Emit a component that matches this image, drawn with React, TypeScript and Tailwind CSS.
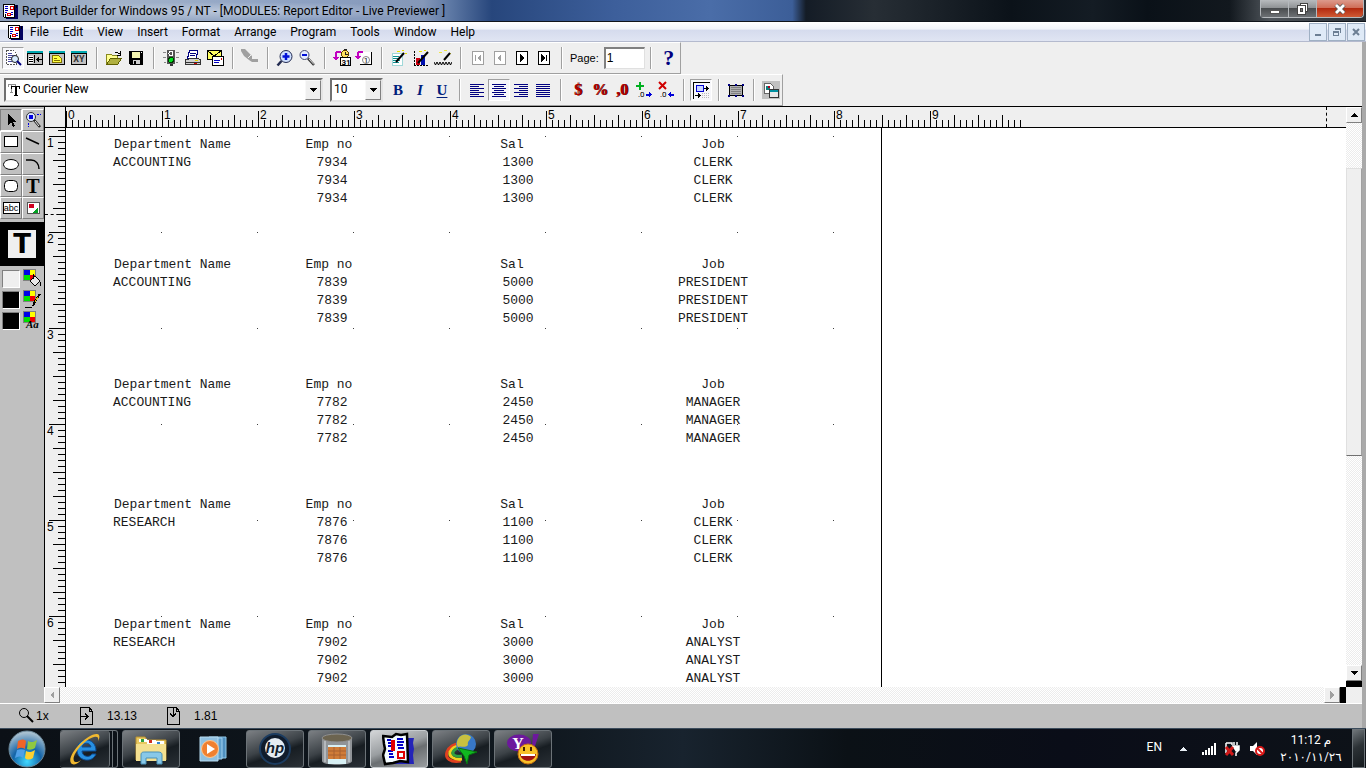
import type { ReactNode } from "react";

const menus = ["File", "Edit", "View", "Insert", "Format", "Arrange", "Program", "Tools", "Window", "Help"];

const records = [
  { department: "ACCOUNTING", empNo: "7934", sal: "1300", job: "CLERK" },
  { department: "ACCOUNTING", empNo: "7839", sal: "5000", job: "PRESIDENT" },
  { department: "ACCOUNTING", empNo: "7782", sal: "2450", job: "MANAGER" },
  { department: "RESEARCH", empNo: "7876", sal: "1100", job: "CLERK" },
  { department: "RESEARCH", empNo: "7902", sal: "3000", job: "ANALYST" },
];

function Svg({ w = 18, h = 18, smooth = false, children }: { w?: number; h?: number; smooth?: boolean; children: ReactNode }) {
  return (
    <svg width={w} height={h} viewBox={`0 0 ${w} ${h}`} fill="none" shapeRendering={smooth ? "auto" : "crispEdges"} className="shrink-0" aria-hidden="true">
      {children}
    </svg>
  );
}

function Tool({ label, pressed = false, disabled = false, children }: { label: string; pressed?: boolean; disabled?: boolean; children: ReactNode }) {
  return (
    <button
      type="button"
      aria-label={label}
      disabled={disabled}
      className={
        pressed
          ? "flex h-[22px] w-[22px] shrink-0 items-center justify-center border border-t-[#a0a0a0] border-r-white border-b-white border-l-[#a0a0a0] bg-[#f6f6fa]"
          : "flex h-[22px] w-[22px] shrink-0 items-center justify-center"
      }
    >
      {children}
    </button>
  );
}

function Separator() {
  return (
    <div className="flex w-[13px] shrink-0 justify-center">
      <div className="h-[22px] w-[2px] border-l border-[#a0a0a0] bg-white" />
    </div>
  );
}

function ReportIcon() {
  return (
    <Svg w={16} h={16}>
      <path d="M3 2h13v14H4z" fill="#000060" />
      <path d="M1 1h11v13H2z" fill="#fff" stroke="#000" />
      <path d="M3 3h3M3 5h3M3 7h3M3 9h2M9 9h2M9 11h2" stroke="#0000c8" />
      <path d="M8 3h3v3H8zM5 10h3v2H5z" stroke="#e00000" />
      <path d="M3 11v4M14 2v3" stroke="#000" />
    </Svg>
  );
}

function MiniWindow({ children }: { children: ReactNode }) {
  return (
    <Svg>
      <path d="M1 3h16v13H1z" fill="#c0c0c0" />
      <path d="M1 2h16v2H1z" fill="#00a8b0" />
      <path d="M1.500 4.500h15v11h-15z" stroke="#000" />
      {children}
    </Svg>
  );
}

function PageArrow({ faded = false, children }: { faded?: boolean; children: ReactNode }) {
  return (
    <Svg w={14} h={16}>
      <path d="M1.500 1.500h11v13h-11z" fill="#fff" stroke={faded ? "#a0a0a0" : "#000"} />
      <g fill={faded ? "#a0a0a0" : "#000"}>{children}</g>
    </Svg>
  );
}

function TitleBar() {
  return (
    <header className="flex h-[22px] shrink-0 items-center border-b border-[#10151c] bg-[linear-gradient(90deg,#8a9db8_0%,#a3b3ca_8%,#8fa3c4_20%,#8497b8_31%,#5d78a4_33%,#27467c_36%,#3d5f9b_45%,#4a6da8_52%,#3c5e98_58%,#141c26_59%,#272e35_64%,#0b1219_74%,#141c24_80%,#0a1118_84%,#12181e_90%,#50565c_93%,#2a3036_100%)] pl-[2px]">
      <ReportIcon />
      <div className="ml-1 flex-1">
        <h1 className="w-fit bg-[radial-gradient(closest-side,rgba(255,255,255,0.35),transparent)] text-[12px] leading-[18px] whitespace-nowrap text-black">
          Report Builder for Windows 95 / NT - [MODULE5: Report Editor - Live Previewer ]
        </h1>
      </div>
      <div className="mr-[2px] flex h-[18px] self-start rounded-b-[4px] border border-t-0 border-[#b5b9bd]">
        <button type="button" aria-label="Minimize" className="flex w-7 items-center justify-center border-r border-[#b5b9bd] bg-[linear-gradient(#b8bbbe_0%,#8d9093_48%,#4a4d50_50%,#6c7074_100%)]">
          <Svg w={12} h={14}>
            <path d="M1.500 8.500h9v3h-9z" fill="#fff" stroke="#555" />
          </Svg>
        </button>
        <button type="button" aria-label="Restore" className="flex w-7 items-center justify-center border-r border-[#b5b9bd] bg-[linear-gradient(#b8bbbe_0%,#8d9093_48%,#4a4d50_50%,#6c7074_100%)]">
          <Svg w={13} h={14}>
            <path d="M4.500 1.500h7v8h-7z" fill="#fff" stroke="#444" />
            <path d="M1.500 3.500h8v9h-8z" fill="#fff" stroke="#444" />
            <path d="M4.500 6.500h2v3h-2z" fill="#777" stroke="#444" />
          </Svg>
        </button>
        <button type="button" aria-label="Close" className="flex w-[46px] items-center justify-center rounded-br-[4px] bg-[linear-gradient(#dc9a8c_0%,#cf6b55_48%,#b32a10_50%,#cf5a34_100%)]">
          <Svg w={14} h={14} smooth>
            <path d="M3 3l8 8M11 3l-8 8" stroke="#555" strokeWidth="4.500" />
            <path d="M3 3l8 8M11 3l-8 8" stroke="#fff" strokeWidth="2.800" />
          </Svg>
        </button>
      </div>
    </header>
  );
}

function MenuBar() {
  const child = "flex h-[18px] w-[18px] items-center justify-center border border-[#9fb0c4] bg-[#dfeaf7]";
  return (
    <nav className="flex h-5 shrink-0 items-center border-b border-[#b4bace] bg-[linear-gradient(#ffffff_0%,#f1f4fa_38%,#d5dbed_42%,#e0e5f3_100%)] pl-[7px]">
      <ReportIcon />
      <ul className="ml-[7px] flex flex-1 gap-[14px] text-[12px] leading-[18px]">
        {menus.map((menu) => (
          <li key={menu}>
            <button type="button">{menu}</button>
          </li>
        ))}
      </ul>
      <div className="mr-px flex gap-px">
        <button type="button" aria-label="Minimize document" className={child}>
          <Svg w={10} h={10}>
            <path d="M2 7h6v2H2z" fill="#6c7f94" />
          </Svg>
        </button>
        <button type="button" aria-label="Restore document" className={child}>
          <Svg w={10} h={10}>
            <path d="M3 1h6v5H8V3H3zM1 4h6v5H1z" fill="#6c7f94" />
            <path d="M2 6h4v2H2z" fill="#dfeaf7" />
          </Svg>
        </button>
        <button type="button" aria-label="Close document" className={child}>
          <Svg w={10} h={10} smooth>
            <path d="M2 2l6 6M8 2l-6 6" stroke="#6c7f94" strokeWidth="2" />
          </Svg>
        </button>
      </div>
    </nav>
  );
}

function StandardToolbar() {
  return (
    <div className="flex h-8 w-fit items-center border-t border-r border-b border-t-white border-r-[#a0a0a0] border-b-[#a0a0a0] pl-[2px]">
      <Tool label="Live previewer" pressed>
        <Svg>
          <path d="M2.500 1.500h7l3 3v11h-10z" fill="#fff" stroke="#555" strokeDasharray="2 1" />
          <path d="M4 4h4M4 6h7M4 8h4M4 10h3M4 12h4" stroke="#4848a0" />
          <circle cx="11" cy="10" r="3.500" fill="#d8ecff" stroke="#222" shapeRendering="auto" />
          <path d="M13 12l4 4" stroke="#000080" strokeWidth="2" shapeRendering="auto" />
        </Svg>
      </Tool>
      <Tool label="Data model">
        <MiniWindow>
          <path d="M3 7h4v7H3z" fill="#fff" />
          <path d="M3 8.500h4M3 10.500h4M3 12.500h4M8.500 6v8M11 10.500h5" stroke="#000" />
          <path d="M10 10.500l3-3v6z" fill="#000" />
        </MiniWindow>
      </Tool>
      <Tool label="Layout model">
        <MiniWindow>
          <path d="M4.500 6.500h6l3 3v4h-9z" fill="#ffff40" stroke="#807000" />
          <path d="M6 9.500h3M6 11.500h6" stroke="#807000" />
        </MiniWindow>
      </Tool>
      <Tool label="Parameter form">
        <MiniWindow>
          <text x="9" y="13" textAnchor="middle" fontSize="9" fontWeight="bold" fill="#333">XY</text>
        </MiniWindow>
      </Tool>
      <Separator />
      <Tool label="Open">
        <Svg>
          <path d="M1.500 15.500v-10h5l1 1h5v3" fill="#ffff90" stroke="#8a8a20" />
          <path d="M1.500 15.500l4-6h11l-4 6z" fill="#b0b040" stroke="#606000" />
          <path d="M9.500 3.500h3l3 2M15.500 2v4h-4" stroke="#000" />
        </Svg>
      </Tool>
      <Tool label="Save">
        <Svg>
          <path d="M2 2h14v14H3l-1-1z" fill="#000" />
          <path d="M5 3h8v6H5z" fill="#f4f4b0" />
          <path d="M6 11h7v4H6z" fill="#d0d0d0" />
          <path d="M7 12h2v3H7z" fill="#000" />
          <path d="M14 3h1v1h-1z" fill="#fff" />
        </Svg>
      </Tool>
      <Separator />
      <Tool label="Run">
        <Svg>
          <path d="M1 3h3M1 8h3M2 13h2M14 3h3M14 8h3M14 13h2" stroke="#888" />
          <path d="M5 1h8v14H5z" fill="#555" />
          <path d="M8 15h3v2H8z" fill="#333" />
          <circle cx="9" cy="4.500" r="2" stroke="#fff" />
          <circle cx="9" cy="11" r="2.500" fill="#00e020" stroke="#003800" />
        </Svg>
      </Tool>
      <Tool label="Print">
        <Svg>
          <path d="M5.500 1.500h8l-1 8h-9z" fill="#fff" stroke="#000080" />
          <path d="M6 4h6M6 6h5" stroke="#000080" />
          <path d="M1.500 10.500h3l1-1h8l3 1v5h-15z" fill="#d0d0d0" stroke="#333" />
          <path d="M2 13h14" stroke="#333" />
          <path d="M11 11h3v1h-3z" fill="#e0d000" />
          <path d="M10 14h3v1h-3z" fill="#c00" />
        </Svg>
      </Tool>
      <Tool label="Mail">
        <Svg>
          <path d="M1.500 1.500h14v9h-14z" fill="#ffff60" stroke="#000" />
          <path d="M2 2l6 5 7-5" stroke="#000" />
          <path d="M6.500 7.500h11v9h-11z" fill="#fff" stroke="#000" />
          <path d="M8 11.500h6M8 13.500h5" stroke="#0000c0" />
          <path d="M15 9h1v2h-1z" fill="#c00" />
        </Svg>
      </Tool>
      <Separator />
      <Tool label="Clear" disabled>
        <Svg smooth>
          <path d="M0 0h4l7 7v3h6v3h-6l-3-2-5-4-3-5z" fill="#a0a0a0" />
          <path d="M7 9l3-3" stroke="#efefef" />
        </Svg>
      </Tool>
      <Separator />
      <Tool label="Zoom in">
        <Svg smooth>
          <circle cx="10" cy="7.500" r="6" fill="#cfe0ff" stroke="#222a50" />
          <path d="M10 4v7M6.500 7.500h7" stroke="#0010d8" strokeWidth="2.500" />
          <path d="M5.500 12l-4 4.500" stroke="#222a50" strokeWidth="2.500" />
        </Svg>
      </Tool>
      <Tool label="Zoom out">
        <Svg smooth>
          <circle cx="6.500" cy="6" r="4.500" fill="#e4ecff" stroke="#444a70" />
          <path d="M4 6h5" stroke="#0010d8" strokeWidth="2" />
          <path d="M10 9.500l6 6.500" stroke="#333" strokeWidth="2.500" />
          <path d="M11 10l5 5.500" stroke="#ddd" />
        </Svg>
      </Tool>
      <Separator />
      <Tool label="Insert date and time">
        <Svg>
          <path d="M0 8l3 4 3-4H4V4h4V2H3L2 4v4z" fill="#c000c0" />
          <circle cx="12" cy="5" r="3.500" fill="#ffe060" stroke="#604000" />
          <path d="M11 .5h3M12.500 3v2h2" stroke="#222" />
          <path d="M7.500 8.500h10v8h-10z" fill="#fff" stroke="#000" />
          <text x="13" y="16" textAnchor="middle" fontSize="8" fontWeight="bold" fill="#000">31</text>
        </Svg>
      </Tool>
      <Tool label="Insert page number">
        <Svg>
          <path d="M6 3h11v13H5z" fill="#fff" />
          <path d="M0 7l3 4 3-4H4V4h4V2H3L2 4v3z" fill="#c000c0" />
          <path d="M5 15.500h11.500V3" stroke="#000" />
          <circle cx="11" cy="11" r="3.500" stroke="#888" shapeRendering="auto" />
          <text x="11" y="14" textAnchor="middle" fontSize="8" fill="#000">1</text>
        </Svg>
      </Tool>
      <Separator />
      <Tool label="Report wizard">
        <Svg>
          <path d="M2 4h10v12H2z" fill="#fff" stroke="#a0d8d8" />
          <path d="M3 7.500h6M3 9.500h5M3 11.500h7M3 13.500h6" stroke="#109090" />
          <path d="M7 2.500h3M12 1.500h2M15 4.500h2" stroke="#e8e000" />
          <path d="M14 4l-8 9" stroke="#000" strokeWidth="2" shapeRendering="auto" />
        </Svg>
      </Tool>
      <Tool label="Chart wizard">
        <Svg>
          <path d="M2.500 2v14M2 16.500h15" stroke="#000" strokeDasharray="2 1" />
          <path d="M4 9h4v7H4z" fill="#d00010" />
          <path d="M9 6h4v10H9z" fill="#0010b0" />
          <path d="M7 2.500h3M12 1.500h2" stroke="#e8e000" />
          <path d="M16 3L6 14" stroke="#000" strokeWidth="2" shapeRendering="auto" />
        </Svg>
      </Tool>
      <Tool label="Web wizard">
        <Svg>
          <path d="M5 3.500h3M10 1.500h3M15 4.500h2" stroke="#f0e840" />
          <path d="M16 4l-6 7" stroke="#000" strokeWidth="2" shapeRendering="auto" />
          <path d="M0 13l1.500 3L3 13l1.500 3L6 13l1.500 3L9 13l1.500 3 1.500-3 1.500 3 1.500-3 1.500 3 1.500-3" stroke="#000" shapeRendering="auto" />
        </Svg>
      </Tool>
      <Separator />
      <Tool label="First page" disabled>
        <PageArrow faded>
          <path d="M4 5h1v6H4zM6 8l4-4v8z" />
        </PageArrow>
      </Tool>
      <Tool label="Previous page" disabled>
        <PageArrow faded>
          <path d="M4 8l4-4v8z" />
        </PageArrow>
      </Tool>
      <Tool label="Next page">
        <PageArrow>
          <path d="M9 8L5 4v8z" />
        </PageArrow>
      </Tool>
      <Tool label="Last page">
        <PageArrow>
          <path d="M8 8L4 4v8zM9 5h1v6H9z" />
        </PageArrow>
      </Tool>
      <Separator />
      <label className="flex items-center gap-[5px] pl-[2px] font-['Liberation_Sans',sans-serif] text-[11px] leading-4">
        Page:
        <input
          defaultValue="1"
          className="h-[22px] w-[41px] border-t-2 border-r border-b border-l-2 border-t-[#808080] border-r-[#e0e0e0] border-b-[#e0e0e0] border-l-[#808080] bg-white pb-[2px] pl-px text-[12px] outline-none"
        />
      </label>
      <Separator />
      <Tool label="Help">
        <span className="font-['Liberation_Serif',serif] text-[22px] leading-[22px] font-bold text-[#000080]">?</span>
      </Tool>
    </div>
  );
}

function Combo({ label, value, wide = false }: { label: string; value: string; wide?: boolean }) {
  return (
    <label
      className={
        (wide ? "w-[319px] " : "w-[53px] ") +
        "flex h-6 shrink-0 items-center border-2 border-t-[#707070] border-r-[#e4e4e4] border-b-[#e4e4e4] border-l-[#707070] bg-white"
      }
    >
      {wide && (
        <Svg w={15} h={16}>
          <path d="M2.500 4V2.500h7M5.500 3v7M4 10.500h3M2.500 2v3M9.500 2v2" stroke="#909090" />
          <path d="M5 4h9v3h-1V5h-2v8h1v1H8v-1h1V5H6v2H5z" fill="#000" />
        </Svg>
      )}
      <select aria-label={label} className="min-w-0 flex-1 appearance-none pb-[2px] pl-[2px] text-[12px] leading-[18px] outline-none">
        <option>{value}</option>
      </select>
      <span className="flex h-5 w-4 shrink-0 items-center justify-center border border-t-[#f8f8f8] border-r-[#808080] border-b-[#808080] border-l-[#f8f8f8] bg-[#efefef]">
        <Svg w={8} h={6}>
          <path d="M0 1h8L4 5z" fill="#000" />
        </Svg>
      </span>
    </label>
  );
}

function AlignIcon({ d }: { d: string }) {
  return (
    <Svg w={16} h={16}>
      <path d={d} stroke="#000080" />
    </Svg>
  );
}

function DecimalIcon({ add = false }: { add?: boolean }) {
  return (
    <Svg>
      {add ? (
        <path d="M5 1v8M1 5h8" stroke="#00b020" strokeWidth="2" />
      ) : (
        <path d="M2 1l7 7M9 1l-7 7" stroke="#d00000" strokeWidth="2" shapeRendering="auto" />
      )}
      <text x="3" y="16" fontSize="8" fill="#000">.0</text>
      <path d={add ? "M17 13.500l-3-3v2h-3v2h3v2z" : "M11 13.500l3-3v2h3v2h-3v2z"} fill="#0000d8" />
    </Svg>
  );
}

function FormatToolbar() {
  const serif = "font-['Liberation_Serif',serif] text-[15px] leading-5 font-bold text-[#00207c]";
  const red = "font-['Liberation_Serif',serif] text-[16px] leading-5 font-bold text-[#b00000] [text-shadow:1px_0_#500000]";
  return (
    <div className="flex h-8 w-fit items-center border-t border-r border-b border-t-white border-r-[#a0a0a0] border-b-[#a0a0a0] pl-1">
      <Combo label="Font" value="Courier New" wide />
      <div className="w-[7px]" />
      <Combo label="Font size" value="10" />
      <div className="w-1" />
      <Tool label="Bold">
        <span className={serif}>B</span>
      </Tool>
      <Tool label="Italic">
        <span className={serif + " italic"}>I</span>
      </Tool>
      <Tool label="Underline">
        <span className={serif + " underline underline-offset-2"}>U</span>
      </Tool>
      <Separator />
      <Tool label="Align left">
        <AlignIcon d="M1 2.500h14M1 4.500h9M1 6.500h14M1 8.500h9M1 10.500h14M1 12.500h9M1 14.500h14" />
      </Tool>
      <Tool label="Align centre" pressed>
        <AlignIcon d="M1 2.500h14M3 4.500h10M1 6.500h14M3 8.500h10M1 10.500h14M3 12.500h10M1 14.500h14" />
      </Tool>
      <Tool label="Align right">
        <AlignIcon d="M1 2.500h14M6 4.500h9M1 6.500h14M6 8.500h9M1 10.500h14M6 12.500h9M1 14.500h14" />
      </Tool>
      <Tool label="Justify">
        <AlignIcon d="M1 2.500h14M1 4.500h14M1 6.500h14M1 8.500h14M1 10.500h14M1 12.500h14M1 14.500h14" />
      </Tool>
      <Separator />
      <Tool label="Currency">
        <span className={red}>$</span>
      </Tool>
      <Tool label="Percent">
        <span className={red}>%</span>
      </Tool>
      <Tool label="Commas">
        <span className={red}>,0</span>
      </Tool>
      <Tool label="Add decimal place">
        <DecimalIcon add />
      </Tool>
      <Tool label="Remove decimal place">
        <DecimalIcon />
      </Tool>
      <Separator />
      <Tool label="Flex mode" pressed>
        <Svg>
          <path d="M1.500 18V1.500H18" stroke="#000" />
          <path d="M4.500 4.500h7v6h-7z" fill="#c8d4ff" stroke="#0000d0" />
          <path d="M12 7.500h4M3 14.500h5" stroke="#000" />
          <path d="M17 7.500l-3-3v6zM9 14.500l-3-3v6z" fill="#000" />
          <path d="M10 12.500h8M10 14.500h8M10 16.500h8" stroke="#bbb" strokeDasharray="1 1" />
        </Svg>
      </Tool>
      <Separator />
      <Tool label="Select parent frame">
        <Svg>
          <path d="M2.500 4.500h13v10h-13z" fill="#b0b0b0" stroke="#000" />
          <path d="M4 6.500h10M4 8.500h10M4 10.500h10M4 12.500h10" stroke="#808080" />
          <path d="M1 3h2v2H1zM8 3h2v2H8zM15 3h2v2h-2zM1 14h2v2H1zM8 14h2v2H8zM15 14h2v2h-2z" fill="#000080" />
        </Svg>
      </Tool>
      <Separator />
      <Tool label="Insert object">
        <Svg>
          <path d="M0 0h18v18H0z" fill="#c0c0c0" />
          <path d="M2.500 2.500h6l3 3v7h-9z" fill="#fff" stroke="#666" />
          <circle cx="6" cy="7" r="2.500" fill="#108080" />
          <path d="M6 5h2v2H6z" fill="#b00020" />
          <path d="M7.500 8.500h9v8h-9z" fill="#e8e8e8" stroke="#333" />
          <path d="M8 9h8v2H8z" fill="#0090a0" />
        </Svg>
      </Tool>
    </div>
  );
}

function PaletteButton({ label, active = false, children }: { label: string; active?: boolean; children: ReactNode }) {
  return (
    <button
      type="button"
      aria-label={label}
      className={
        active
          ? "flex h-[22px] w-[22px] items-center justify-center border border-t-[#808080] border-r-white border-b-white border-l-[#808080] bg-[#b0b0b0]"
          : "flex h-[22px] w-[22px] items-center justify-center border border-t-white border-r-[#808080] border-b-[#808080] border-l-white bg-[#c0c0c0]"
      }
    >
      {children}
    </button>
  );
}

function ColorRow({ label, fill, children }: { label: string; fill: string; children: ReactNode }) {
  return (
    <div className="flex h-[21px] items-center pl-[2px]">
      <div className={fill + " h-[18px] w-[18px] border border-t-[#808080] border-r-white border-b-white border-l-[#808080]"} />
      <button type="button" aria-label={label} className="ml-[3px]">
        <Svg w={19} h={19}>
          <path d="M.500.500h12v11H.500z" stroke="#808080" />
          <path d="M1 1h6v5H1z" fill="#0000e8" />
          <path d="M7 1h5v5H7z" fill="#ffff00" />
          <path d="M1 6h6v5H1z" fill="#00e000" />
          <path d="M7 6h5v5H7z" fill="#f00000" />
          {children}
        </Svg>
      </button>
    </div>
  );
}

function ToolPalette() {
  return (
    <aside className="w-11 shrink-0 bg-[#c0c0c0] pt-[2px]">
      <div className="grid grid-cols-2">
        <PaletteButton label="Select" active>
          <Svg w={16} h={16}>
            <path d="M5 2v11l3-3 2 5 2-1-2-4h4z" fill="#000" />
          </Svg>
        </PaletteButton>
        <PaletteButton label="Magnify">
          <Svg w={18} h={18} smooth>
            <circle cx="7" cy="6" r="4.500" fill="#dce8ff" stroke="#333" />
            <path d="M5 4h4v4H5z" fill="#0000e0" />
            <path d="M10 9l6 7" stroke="#222" strokeWidth="2.500" />
            <path d="M11 10l4 5" stroke="#eee" />
            <path d="M13 3.500h4M4.500 12v4" stroke="#0000e0" strokeDasharray="2 1" />
          </Svg>
        </PaletteButton>
        <PaletteButton label="Rectangle">
          <Svg w={16} h={16}>
            <path d="M1.500 2.500h13v10h-13z" fill="#fff" stroke="#000" />
          </Svg>
        </PaletteButton>
        <PaletteButton label="Line">
          <Svg w={16} h={16} smooth>
            <path d="M1 4l13 6" stroke="#000" strokeWidth="1.500" />
          </Svg>
        </PaletteButton>
        <PaletteButton label="Ellipse">
          <Svg w={16} h={16} smooth>
            <ellipse cx="8" cy="8.500" rx="7.500" ry="5" fill="#fff" stroke="#000" />
          </Svg>
        </PaletteButton>
        <PaletteButton label="Arc">
          <Svg w={16} h={16} smooth>
            <path d="M1 4h5c5 0 8 4 8 9" stroke="#000" strokeWidth="1.500" />
          </Svg>
        </PaletteButton>
        <PaletteButton label="Rounded rectangle">
          <Svg w={16} h={16} smooth>
            <rect x="1.500" y="2.500" width="13" height="11" rx="4" fill="#fff" stroke="#000" />
          </Svg>
        </PaletteButton>
        <PaletteButton label="Text">
          <span className="font-['Liberation_Serif',serif] text-[20px] leading-5 font-bold">T</span>
        </PaletteButton>
        <PaletteButton label="Field">
          <span className="flex h-3 w-[17px] items-center justify-center border border-black bg-white font-['Liberation_Sans',sans-serif] text-[9px] leading-[10px]">abc</span>
        </PaletteButton>
        <PaletteButton label="Link file">
          <Svg w={16} h={16}>
            <path d="M2.500 2.500h12v11h-12z" fill="#fff" stroke="#555" />
            <path d="M4 4h5v4H4z" fill="#d00020" />
            <path d="M13 7v6H7z" fill="#00a020" />
          </Svg>
        </PaletteButton>
      </div>
      <div className="mt-[3px] mb-[2px] flex h-11 items-center justify-center bg-black">
        <div className="flex h-7 w-7 items-center justify-center bg-[#efefef] font-['DejaVu_Sans',sans-serif] text-[26px] leading-7 font-bold">T</div>
      </div>
      <ColorRow label="Fill color" fill="bg-[#efefef]">
        <path d="M7 12l5-5 5 5-5 5z" fill="#e8e8e8" stroke="#000" shapeRendering="auto" />
        <path d="M10.500 5v5M17.500 13v4" stroke="#000" />
      </ColorRow>
      <ColorRow label="Line color" fill="bg-black">
        <path d="M2 17.500h7" stroke="#000" />
        <path d="M17 4l-5 7M13 9l-3 7" stroke="#000" strokeWidth="2" />
        <path d="M15 7l-3 5" stroke="#d8c000" />
      </ColorRow>
      <ColorRow label="Text color" fill="bg-black">
        <text x="3" y="17" fontSize="11" fontWeight="bold" fontStyle="italic" fontFamily="Liberation Serif" fill="#000">Aa</text>
      </ColorRow>
    </aside>
  );
}

const ticks = Array.from({ length: 16 }, (_, i) => i);
const tickStart = (i: number) => (i === 0 ? 4 : i % 4 === 0 ? 8 : 13);

function HorizontalRuler() {
  return (
    <div className="relative min-w-0 overflow-hidden border-b border-black bg-[#efefef]">
      <svg width="957" height="20" className="absolute inset-0" shapeRendering="crispEdges" aria-hidden="true">
        <pattern id="across" width="96" height="20" patternUnits="userSpaceOnUse">
          {ticks.map((i) => (
            <rect key={i} x={i * 6} y={tickStart(i)} width="1" height={20 - tickStart(i)} />
          ))}
        </pattern>
        <rect width="957" height="20" fill="url(#across)" />
      </svg>
      <div className="relative flex font-['Liberation_Sans',sans-serif]">
        {["0", "1", "2", "3", "4", "5", "6", "7", "8", "9"].map((inch) => (
          <span key={inch} className="w-24 shrink-0 pl-[2px] text-[12px] leading-4">
            {inch}
          </span>
        ))}
      </div>
      <div className="absolute inset-y-0 left-[1260px] border-l border-dashed border-black" />
    </div>
  );
}

function VerticalRuler() {
  return (
    <div className="relative min-h-0 overflow-hidden border-r border-l border-black bg-[#efefef]">
      <svg width="20" height="100%" className="absolute inset-0" shapeRendering="crispEdges" aria-hidden="true">
        <pattern id="down" width="20" height="96" patternUnits="userSpaceOnUse" patternTransform="translate(0 8)">
          {ticks.map((i) => (
            <rect key={i} x={tickStart(i)} y={i * 6} width={20 - tickStart(i)} height="1" />
          ))}
        </pattern>
        <rect width="20" height="100%" fill="url(#down)" />
      </svg>
      <div className="relative flex flex-col pt-[7px] font-['Liberation_Sans',sans-serif]">
        {["1", "2", "3", "4", "5", "6"].map((inch) => (
          <span key={inch} className="h-24 shrink-0 pl-[2px] text-[12px] leading-4">
            {inch}
          </span>
        ))}
      </div>
      <div className="absolute inset-x-0 top-[86px] border-t border-dashed border-black" />
    </div>
  );
}

function ReportGroup({ department, empNo, sal, job }: (typeof records)[number]) {
  return (
    <table className="mb-12 w-[706px] table-fixed border-collapse">
      <thead>
        <tr className="h-[18px]">
          <th className="w-[216px] pl-12 text-left font-normal">Department Name</th>
          <th className="w-[100px] pr-[6px] text-center font-normal">Emp no</th>
          <th className="w-[272px] pr-3 text-center font-normal">Sal</th>
          <th className="w-[118px] text-center font-normal">Job</th>
        </tr>
      </thead>
      <tbody>
        {[0, 1, 2].map((row) => (
          <tr key={row} className="h-[18px]">
            <td className="pl-[47px]">{row === 0 ? department : ""}</td>
            <td className="text-center">{empNo}</td>
            <td className="text-center">{sal}</td>
            <td className="text-center">{job}</td>
          </tr>
        ))}
      </tbody>
    </table>
  );
}

function ReportCanvas() {
  return (
    <main className="min-h-0 min-w-0 overflow-hidden bg-white">
      <div className="relative h-full w-[816px] overflow-hidden border-r border-black pt-2 font-['Liberation_Mono',monospace] text-[13px] leading-[18px] text-[#1a1a1a]">
        <svg width="100%" height="100%" className="absolute inset-0" shapeRendering="crispEdges" aria-hidden="true">
          <pattern id="grid" width="96" height="96" patternUnits="userSpaceOnUse">
            <rect x="95" y="8" width="1" height="1" fill="#404040" />
          </pattern>
          <rect width="100%" height="100%" fill="url(#grid)" />
        </svg>
        {records.map((record) => (
          <ReportGroup key={record.empNo} {...record} />
        ))}
      </div>
    </main>
  );
}

function ScrollButton({ label, d, faded = false }: { label: string; d: string; faded?: boolean }) {
  return (
    <button
      type="button"
      aria-label={label}
      className="flex h-4 w-4 shrink-0 items-center justify-center border border-t-white border-r-[#808080] border-b-[#808080] border-l-white bg-[#efefef]"
    >
      <Svg w={8} h={8}>
        <path d={d} fill={faded ? "#a0a0a0" : "#000"} />
      </Svg>
    </button>
  );
}

function VerticalScroll() {
  return (
    <div className="flex w-4 shrink-0 flex-col bg-[repeating-conic-gradient(#ffffff_0_25%,#ececec_0_50%)] bg-[length:2px_2px]">
      <ScrollButton label="Scroll up" d="M0 6h8L4 2z" />
      <div className="flex-[45]" />
      <div className="flex-[287] border border-t-[#e0e0e0] border-r-[#a0a0a0] border-b-[#707070] border-l-[#e0e0e0] bg-[#efefef]" />
      <div className="flex-[210]" />
      <ScrollButton label="Scroll down" d="M0 2h8L4 6z" />
      <div className="h-[6px] bg-black" />
    </div>
  );
}

function HorizontalScroll() {
  return (
    <div className="flex h-4 shrink-0 bg-[#efefef]">
      <div className="flex flex-1 justify-between bg-[repeating-conic-gradient(#ffffff_0_25%,#ececec_0_50%)] bg-[length:2px_2px]">
        <ScrollButton label="Scroll left" d="M6 0v8L2 4z" faded />
        <ScrollButton label="Scroll right" d="M2 0v8l4-4z" faded />
      </div>
      <div className="w-[6px] bg-black" />
      <div className="w-4" />
    </div>
  );
}

function StatusBar() {
  return (
    <footer className="flex h-[25px] shrink-0 items-center border-t border-white bg-[#c0c0c0] pl-[18px] font-['Liberation_Sans',sans-serif] text-[12px] leading-4">
      <Svg w={18} h={18} smooth>
        <circle cx="6" cy="6" r="4.500" stroke="#000" />
        <path d="M9 9l6 6" stroke="#000" strokeWidth="2" />
      </Svg>
      <span className="w-[43px]">1x</span>
      <Svg w={16} h={18}>
        <path d="M1.500.500h9l3 4v13h-12zM10.500.500v4h3M1 9.500h8M6 6.500l3 3-3 3" stroke="#000" />
      </Svg>
      <span className="w-[71px] pl-3">13.13</span>
      <Svg w={16} h={18}>
        <path d="M1.500.500h9l3 4v13h-12zM10.500.500v4h3M7.500 1v8M4 6.500l3 3 3-3" stroke="#000" />
      </Svg>
      <span className="pl-3">1.81</span>
    </footer>
  );
}

function TaskButton({ label, look = "open", children }: { label: string; look?: "open" | "active" | "pinned"; children: ReactNode }) {
  const looks = {
    open: "border-[#6c7378] bg-[linear-gradient(160deg,#7c8084_0%,#3c4247_45%,#171d22_60%,#2a3036_100%)]",
    active: "border-[#c8cccf] bg-[linear-gradient(160deg,#d4d6d8_0%,#9a9ea1_45%,#6a6e71_60%,#9a9ea1_100%)]",
    pinned: "border-transparent",
  };
  return (
    <button type="button" aria-label={label} className={looks[look] + " flex h-[38px] w-[58px] shrink-0 items-center justify-center rounded-[3px] border"}>
      {children}
    </button>
  );
}

function Taskbar() {
  return (
    <footer className="flex h-10 shrink-0 items-center border-t border-[#3c4c5c] bg-[linear-gradient(90deg,#0b1016_0%,#10181f_40%,#18232e_50%,#0b1116_62%,#0a0d18_78%,#0d1218_100%)] text-white">
      <button type="button" aria-label="Start" className="ml-[7px]">
        <Svg w={40} h={40} smooth>
          <defs>
            <radialGradient id="orb" cx="50%" cy="85%" r="80%">
              <stop offset="0" stopColor="#40d8ff" />
              <stop offset=".5" stopColor="#1464a8" />
              <stop offset="1" stopColor="#a8c0d0" />
            </radialGradient>
          </defs>
          <circle cx="20" cy="20" r="18" fill="url(#orb)" stroke="#6c8898" />
          <path d="M11 12c3-2 6-2 8 0l-1 8c-3-2-6-1-8 0z" fill="#f06428" />
          <path d="M21 12c3 2 6 1 9-1l-2 8c-3 2-6 2-8 1z" fill="#90c840" />
          <path d="M10 21c3-1 5-1 8 0l-2 8c-2-2-5-2-8 0z" fill="#50a0e8" />
          <path d="M19 22c3 2 6 1 9-1l-2 8c-3 2-6 2-8 0z" fill="#ffd030" />
        </Svg>
      </button>
      <div className="ml-[13px] flex rounded-[3px] border border-l-0 border-[#6c7378]">
        <button type="button" aria-label="Internet Explorer" className="flex h-9 w-[50px] items-center justify-center rounded-[3px] border-r border-[#6c7378] bg-[linear-gradient(160deg,#7c8084_0%,#3c4247_45%,#171d22_60%,#2a3036_100%)]">
          <Svg w={34} h={34} smooth>
            <path d="M28 19H14c0 6 8 7 10 3h4c-4 10-19 7-19-4 0-13 19-14 19 1zm-5-4c-1-5-8-5-9 0z" fill="#2890e0" stroke="#0c4c94" />
            <path d="M3 31c-5-7 16-30 26-29 3 0 3 4 1 7 1-4-1-5-4-4C17 7 3 23 6 29c1 2 5 1 7-1-3 4-8 6-10 3z" fill="#f0b830" />
          </Svg>
        </button>
        <div className="w-[3px] border-r border-[#6c7378]" />
        <div className="w-[4px]" />
      </div>
      <div className="ml-1 flex gap-[4px]">
        <TaskButton label="Windows Explorer">
          <Svg w={34} h={34} smooth>
            <path d="M2 5h9l2 3h19v20H2z" fill="#e8c860" stroke="#b89030" />
            <path d="M5 7h8v3H5zM13 8h9v4h-9zM21 9h9v4h-9z" fill="#fff" />
            <path d="M7 7h3v3H7z" fill="#30a040" />
            <path d="M15 8h3v3h-3z" fill="#d03020" />
            <path d="M23 10h3v2h-3z" fill="#3080d0" />
            <path d="M2 12h30v17H2z" fill="#f4e090" />
            <path d="M7 32v-9c0-3 2-3 4-3h13c3 0 4 1 4 3v9h-5v-6H12v6z" fill="#88c8e8" stroke="#4890b8" />
          </Svg>
        </TaskButton>
        <TaskButton label="Media Player" look="pinned">
          <Svg w={30} h={30} smooth>
            <path d="M11 3h17v21H11z" fill="#5090c0" stroke="#90c8e8" />
            <path d="M7 4h17v21H7z" fill="#60a0cc" stroke="#a0d0f0" />
            <path d="M2 3h18v24H2z" fill="#90c0e0" stroke="#b8dcf0" />
            <circle cx="12" cy="15" r="8.500" fill="#f08030" stroke="#ffc890" />
            <path d="M9 10l8 5-8 5z" fill="#fff" />
          </Svg>
        </TaskButton>
        <TaskButton label="HP">
          <Svg w={34} h={34} smooth>
            <circle cx="17" cy="17" r="15" fill="#101c2c" stroke="#1c3c60" strokeWidth="2" />
            <circle cx="17" cy="16" r="10" fill="#e4ecf2" />
            <text x="17" y="21" textAnchor="middle" fontSize="15" fontWeight="bold" fontStyle="italic" fontFamily="Liberation Sans" fill="#101c2c">hp</text>
          </Svg>
        </TaskButton>
        <TaskButton label="Database">
          <Svg w={32} h={34} smooth>
            <path d="M1 6v23c0 5 30 5 30 0V6z" fill="#909498" />
            <path d="M4 8v22M28 8v22" stroke="#b4b8bc" strokeWidth="2" />
            <ellipse cx="16" cy="6" rx="15" ry="4" fill="#6c6450" stroke="#909090" />
            <path d="M7 13h18v19H7z" fill="#d8f0f4" />
            <path d="M7 15h18v12H7z" fill="#d07c38" />
            <path d="M7 19h18M7 23h18M13 15v12M19 15v12" stroke="#a86030" />
          </Svg>
        </TaskButton>
        <TaskButton label="Report Builder" look="active">
          <Svg w={34} h={34} smooth>
            <path d="M10 6h22l-1 5 1 6-1 6 1 9H8z" fill="#2424b8" />
            <path d="M1 4l9 1 4-3 5 1 6-1 1 28-8-1-7 2-8 1-2-9 2-6-1-5z" fill="#f4fcff" stroke="#000" strokeWidth="2.500" />
            <path d="M5 8h4M6 11h4M6 14h3M6 19h5M7 22h4M7 25h5M15 7h6M15 10h7M15 13h6M16 16h6" stroke="#0000c8" strokeWidth="2" />
            <path d="M10 9h2v4h-2zM10 15h2v3h-2zM16 20h6v6h-6z" stroke="#e00000" strokeWidth="2" />
          </Svg>
        </TaskButton>
        <TaskButton label="Download Manager">
          <Svg w={34} h={34} smooth>
            <path d="M17 29C6 31 1 26 3 20c2-5 7-8 12-8" stroke="#e04020" strokeWidth="3" />
            <path d="M18 27C9 28 5 24 6 20c2-4 5-6 10-6" stroke="#f0d020" strokeWidth="3" />
            <path d="M18 24c-6 1-10-1-9-4 1-2 4-4 7-4" stroke="#30a040" strokeWidth="3" />
            <circle cx="22" cy="12" r="10" fill="#3878c8" />
            <path d="M14 7c4-6 10-5 13-2-1 4-4 4-3 8-4 4-7 0-10 2-2-3-1-6 0-8z" fill="#c8c040" />
            <path d="M14 16l19 4-8 3-2 9-3-8z" fill="#10b820" stroke="#087010" />
          </Svg>
        </TaskButton>
        <TaskButton label="Messenger">
          <Svg w={34} h={34} smooth>
            <ellipse cx="13" cy="11" rx="12" ry="8.500" fill="#6c189c" />
            <path d="M27 2h6l-4 12h-3z" fill="#6c189c" />
            <text x="12" y="17" textAnchor="middle" fontSize="16" fontWeight="bold" fontFamily="Liberation Serif" fill="#fff">Y</text>
            <circle cx="22" cy="22" r="10" fill="#f8c028" stroke="#c87010" />
            <path d="M18 15v4M25 15v4" stroke="#402000" strokeWidth="2" />
            <path d="M14 22h16c-1 9-15 9-16 0z" fill="#a01010" />
            <path d="M15 22h14v2H15z" fill="#fff" />
          </Svg>
        </TaskButton>
      </div>
      <div className="ml-auto flex h-full items-center">
        <button type="button" className="mr-[17px] pb-1 text-[12px] leading-4">EN</button>
        <button type="button" aria-label="Show hidden icons" className="mr-[14px]">
          <Svg w={8} h={6}>
            <path d="M0 5h8L4 1z" fill="#e8eef4" />
          </Svg>
        </button>
        <Svg w={16} h={14}>
          <path d="M1 10h2v3H1zM4 8h2v5H4zM7 6h2v7H7zM10 4h2v9h-2zM13 1h2v12h-2z" fill="#fff" />
        </Svg>
        <div className="w-[7px]" />
        <Svg w={18} h={16} smooth>
          <path d="M2 2h6v2M2 2v10M10 1v3M13 1v3M8 5h7v4l-3 3v3" stroke="#fff" strokeWidth="1.500" />
          <path d="M8 5h7v4l-3 2z" fill="#fff" />
          <path d="M2 6l7 8M9 6l-7 8" stroke="#d01818" strokeWidth="3" />
        </Svg>
        <div className="w-[7px]" />
        <Svg w={18} h={16} smooth>
          <path d="M1 5h3l4-4v13L4 10H1z" fill="#fff" />
          <circle cx="11" cy="10" r="4" fill="#fff" stroke="#d81818" strokeWidth="2" />
          <path d="M8 7l6 6" stroke="#d81818" strokeWidth="2" />
        </Svg>
        <div dir="ltr" className="mr-[9px] ml-3 w-[64px] text-center font-['Roboto','DejaVu_Sans',sans-serif] text-[12px] leading-[17px] whitespace-nowrap">
          <p>11:12 م</p>
          <p>٢٠١٠/١١/٢٦</p>
        </div>
        <button type="button" aria-label="Show desktop" className="mr-px h-full w-[13px] border border-[#6c7378] bg-[linear-gradient(150deg,#70767a_0%,#2c3236_45%,#14191d_100%)]" />
      </div>
    </footer>
  );
}

export default function App() {
  return (
    <div className="flex h-screen flex-col overflow-hidden bg-[#efefef] font-['Roboto','Noto_Sans',sans-serif] text-black">
      <TitleBar />
      <MenuBar />
      <div className="flex min-h-0 flex-1 border-r-4 border-[#a9a9a9]">
        <div className="flex min-w-0 flex-1 flex-col">
          <div className="flex shrink-0 flex-col border-b border-black">
            <StandardToolbar />
            <FormatToolbar />
          </div>
          <div className="flex min-h-0 flex-1">
            <ToolPalette />
            <div className="flex min-w-0 flex-1 flex-col">
              <div className="flex min-h-0 flex-1">
                <div className="grid min-w-0 flex-1 grid-cols-[22px_minmax(0,1fr)] grid-rows-[21px_minmax(0,1fr)]">
                  <div className="border border-t-0 border-black" />
                  <HorizontalRuler />
                  <VerticalRuler />
                  <ReportCanvas />
                </div>
                <VerticalScroll />
              </div>
              <HorizontalScroll />
            </div>
          </div>
          <StatusBar />
        </div>
      </div>
      <Taskbar />
    </div>
  );
}
